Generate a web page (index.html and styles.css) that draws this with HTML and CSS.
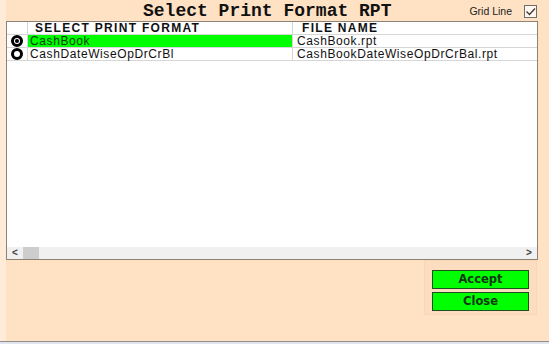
FILE: index.html
```html
<!DOCTYPE html>
<html>
<head>
<meta charset="utf-8">
<link rel="stylesheet" href="styles.css">
</head>
<body>
<div class="window">
  <div class="titlebar">
    <div class="title">Select Print Format RPT</div>
    <div class="gridline">
      <span class="gl-text">Grid Line</span>
      <span class="chk"><svg width="11" height="11" viewBox="0 0 11 11"><path d="M1.5 5.5 L4.5 8.5 L10 2.5" fill="none" stroke="#3a3a3a" stroke-width="1.3"/></svg></span>
    </div>
  </div>
  <div class="grid">
    <table class="tbl">
      <thead>
        <tr><th class="c-sel"></th><th class="c-fmt">SELECT PRINT FORMAT</th><th class="c-file">FILE NAME</th></tr>
      </thead>
      <tbody>
        <tr class="active"><td class="c-sel"><span class="radio on"></span></td><td class="c-fmt hl">CashBook</td><td class="c-file">CashBook.rpt</td></tr>
        <tr><td class="c-sel"><span class="radio"></span></td><td class="c-fmt">CashDateWiseOpDrCrBl</td><td class="c-file">CashBookDateWiseOpDrCrBal.rpt</td></tr>
      </tbody>
    </table>
    <div class="fill"></div>
    <div class="hscroll">
      <span class="arr">&lt;</span>
      <span class="thumb"></span>
      <span class="track"></span>
      <span class="arr">&gt;</span>
    </div>
  </div>
  <div class="bottom">
    <div class="btnpanel">
      <button class="btn">Accept</button>
      <button class="btn">Close</button>
    </div>
  </div>
</div>
</body>
</html>
```

FILE: styles.css
```css
html, body {
  margin: 0;
  padding: 0;
}
body {
  width: 549px;
  height: 344px;
  background: #E2E5EC;
  overflow: hidden;
  font-family: "Liberation Sans", Arial, sans-serif;
}
.window {
  height: 342px;
  box-sizing: border-box;
  border-bottom: 1px solid #8E8E8E;
  background: linear-gradient(to right, #FFEBD8 0, #FFEBD8 6px, #FFE1C4 6px);
  display: flex;
  flex-direction: column;
}
.titlebar {
  height: 21px;
  display: flex;
  align-items: center;
}
.title {
  font-family: "Liberation Mono", "Courier New", monospace;
  font-weight: bold;
  font-size: 18px;
  line-height: 21px;
  color: #111;
  padding-left: 143px;
  padding-top: 1px;
}
.gridline {
  margin-left: auto;
  margin-right: 12px;
  display: flex;
  align-items: center;
}
.gl-text {
  font-size: 10.5px;
  color: #222;
}
.chk {
  width: 11px;
  height: 11px;
  border: 1px solid #6E6E6E;
  background: #FFF6EE;
  margin-left: 12px;
  margin-top: 2px;
  display: flex;
}
.grid {
  margin-left: 6px;
  width: 532px;
  height: 239px;
  box-sizing: border-box;
  border: 1px solid #8C8276;
  background: #FFFFFF;
  display: flex;
  flex-direction: column;
}
.tbl {
  border-collapse: collapse;
  width: 100%;
  table-layout: fixed;
}
.tbl th, .tbl td {
  border: 1px solid #D6D6D6;
  height: 12px;
  padding: 0;
  line-height: 12px;
  white-space: nowrap;
  text-align: left;
}
.tbl tr > :first-child { border-left: none; }
.tbl tr > :last-child { border-right: none; }
.tbl thead th { border-top: none; }
.tbl th {
  font-size: 12px;
  font-weight: bold;
  letter-spacing: 1.3px;
  color: #111;
}
.tbl td {
  font-size: 12px;
  letter-spacing: 0.6px;
  color: #111;
}
.tbl th.c-sel { width: 20px; }
.tbl th.c-fmt { width: 257px; padding-left: 7px; }
.tbl th.c-file { padding-left: 9px; }
.tbl td.c-fmt { padding-left: 2px; }
.tbl td.c-file { padding-left: 4px; }
.tbl td.hl {
  background: #00FF00;
  color: #0B3A0B;
}
.tbl td.c-sel {
  text-align: center;
  vertical-align: middle;
  line-height: 0;
}
.radio {
  display: inline-block;
  width: 6px;
  height: 6px;
  border: 3px solid #000;
  border-radius: 50%;
  box-sizing: content-box;
  vertical-align: middle;
  position: relative;
}
.radio.on::after {
  content: "";
  position: absolute;
  left: 1px;
  top: 1px;
  width: 4px;
  height: 4px;
  border-radius: 50%;
  background: #000;
}
.fill { flex: 1; }
.hscroll {
  height: 12px;
  background: #F0F0F0;
  display: flex;
  align-items: center;
  font-size: 10px;
  font-weight: bold;
  color: #444;
}
.arr {
  width: 16px;
  text-align: center;
  line-height: 12px;
}
.thumb {
  width: 16px;
  height: 12px;
  background: #CDCDCD;
}
.track { flex: 1; }
.bottom {
  display: flex;
  justify-content: flex-end;
  padding-right: 12px;
}
.btnpanel {
  width: 113px;
  height: 55px;
  box-sizing: border-box;
  background: #FDDDBF;
  border: 1px solid #F9D6B6;
  display: flex;
  flex-direction: column;
  align-items: center;
  padding-top: 9px;
  gap: 3px;
}
.btn {
  width: 97px;
  height: 19px;
  margin: 0;
  padding: 0;
  border: 1px solid #1F4F1F;
  background: #00FF00;
  font-family: "DejaVu Sans", Verdana, sans-serif;
  font-weight: bold;
  font-size: 11.5px;
  color: #123812;
  line-height: 17px;
}
```
